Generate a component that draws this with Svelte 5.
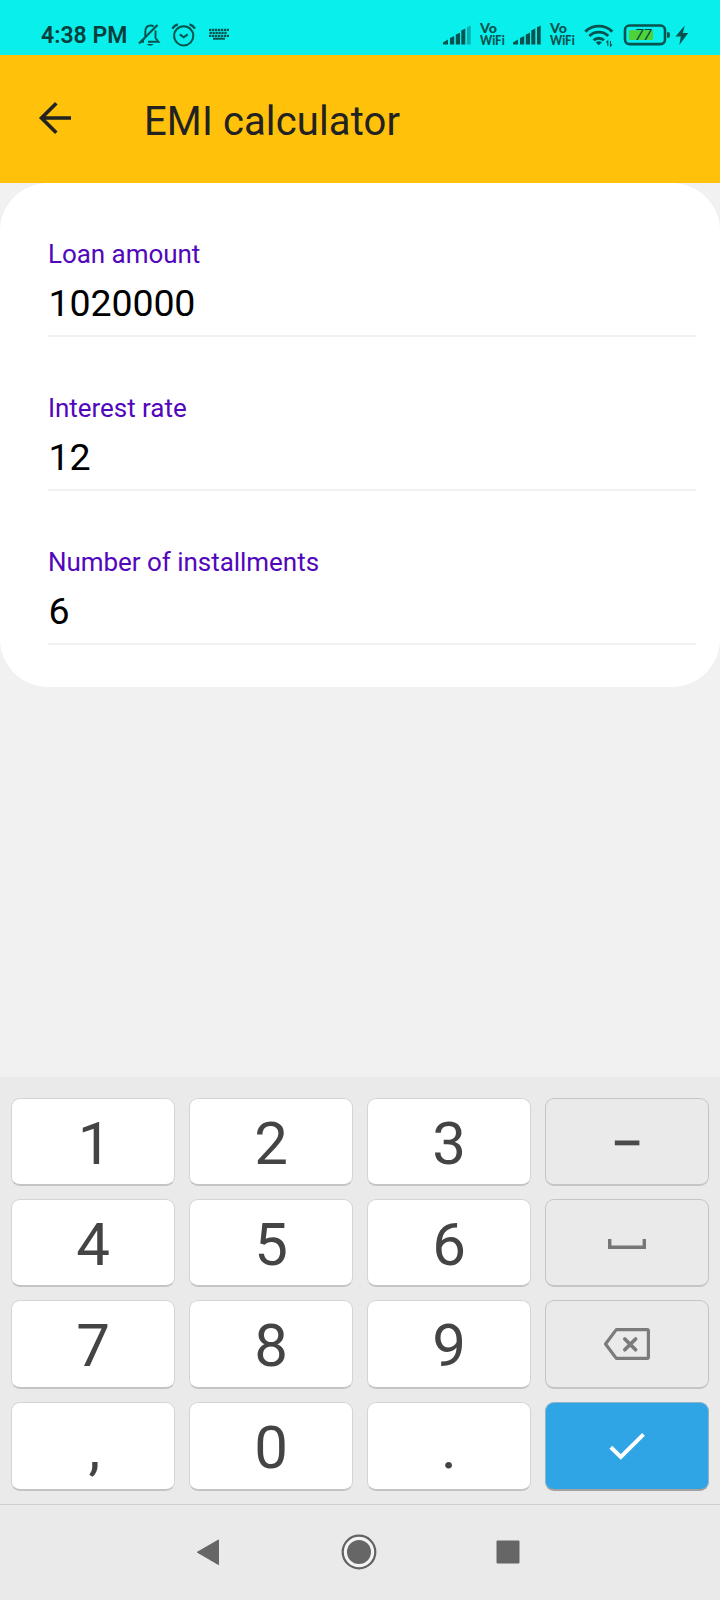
<script>
  const fields = [
    { label: 'Loan amount', value: '1020000' },
    { label: 'Interest rate', value: '12' },
    { label: 'Number of installments', value: '6' }
  ];
  const keys = ['1', '2', '3', 'minus', '4', '5', '6', 'space', '7', '8', '9', 'delete', ',', '0', '.', 'done'];
  const special = ['minus', 'space', 'delete', 'done'];
  const keyboardRows = [
    { y: 30, x: 209, n: 7 },
    { y: 33, x: 209.6, n: 6 },
    { y: 36, x: 209, n: 7 }
  ];
</script>

{#snippet signal(weak)}
  <svg class="signal" width="28" height="20" viewBox="0 0 28 20">
    <path d="M0 19.500v-2L5 14.500v5z" />
    <path d="M7 19.500v-6.500l4.200-1.900v8.400z" />
    <path d="M12.800 19.500V9.600l4.200-1.900v11.800z" />
    <path d="M18.300 19.500V5.600l4-2.200v16.100z" />
    <path d="M24 19.500V2.300L27.700.500v19z" opacity={weak ? 0.4 : 1} />
  </svg>
{/snippet}

{#snippet vowifi()}
  <svg class="vowifi" width="26" height="24" viewBox="0 0 26 24">
    <text x="0" y="11" textLength="17" lengthAdjust="spacingAndGlyphs">Vo</text>
    <text x="0" y="22.900" textLength="24.700" lengthAdjust="spacingAndGlyphs">WiFi</text>
  </svg>
{/snippet}

<div class="screen">
  <div class="status">
    <span class="time">4:38 PM</span>
    <svg class="bell" width="24" height="24" viewBox="138 23 24 24" fill="none" stroke="currentColor" stroke-width="1.900">
      <path d="M145.300 36.500V32c0-4.200 2-6.500 5.400-6.500 1.300 0 2.200.3 3 .9M155.500 30.500v7.500l3 3.700H148M144.500 38.300l-3 3.400h2.500" />
      <path d="M139 43.500L157.500 25" stroke-width="2.100" />
      <path d="M147 44h6.400c-.7 2.200-5.700 2.200-6.400 0z" fill="currentColor" stroke="none" />
    </svg>
    <svg class="alarm" width="26" height="26" viewBox="171 22 26 26" fill="none" stroke="currentColor" stroke-width="2">
      <circle cx="183.700" cy="35.800" r="9.600" />
      <path d="M179.800 34.300l3.900 3 4-3" stroke-width="2.100" />
      <path d="M172.300 28.700c1.200-2 3-3.500 5.500-4.300M195 28.700c-1.200-2-3-3.500-5.500-4.300" stroke-width="2.300" />
    </svg>
    <svg class="board" width="22" height="14" viewBox="208 27 22 14">
      {#each keyboardRows as row}
        {#each Array(row.n) as _, i}
          <rect x={row.x + i * 2.950} y={row.y - 1.200} width="2.300" height="2.200" />
        {/each}
      {/each}
      <rect x="213" y="37.700" width="12" height="2" />
    </svg>
    <span class="spring"></span>
    {@render signal(true)}
    {@render vowifi()}
    {@render signal(false)}
    {@render vowifi()}
    <svg class="wifi" width="30" height="24" viewBox="584 24 30 24" fill="none" stroke="currentColor" stroke-width="2.900">
      <path d="M585.300 31.600a19.500 19.500 0 0 1 27 0" />
      <path d="M589.300 36a13.500 13.500 0 0 1 19 0" />
      <path d="M593.600 40.300a7.500 7.500 0 0 1 10.400 0" />
      <path d="M595.800 42.600a4.200 4.200 0 0 1 6 0l-3 2.600z" fill="currentColor" stroke="none" />
      <path d="M607.800 46v-5l-1.400 1.500M610.500 41v5l1.400-1.500" stroke-width="1.100" />
    </svg>
    <svg class="battery" width="48" height="22" viewBox="623 24 48 22">
      <rect x="625" y="25.500" width="40" height="18.600" rx="4.500" fill="none" stroke="currentColor" stroke-width="2.600" />
      <rect x="629" y="30.300" width="24" height="9.600" rx="1" fill="#4fd237" />
      <path d="M667 32.200h1.500q1.300 0 1.300 1.300v3q0 1.300-1.300 1.300H667z" />
      <text x="635" y="39.900" textLength="16.500" lengthAdjust="spacingAndGlyphs">77</text>
    </svg>
    <svg class="bolt" width="14" height="22" viewBox="675 24 14 22">
      <path d="M684.700 25.500L675.500 36.500h5.300l-1.500 8.500 8.900-12h-5.300z" />
    </svg>
  </div>

  <header>
    <svg width="34" height="34" viewBox="0 0 34 34" fill="none" stroke="#222" stroke-width="3.600">
      <path d="M33 17H3.500M18.300 2.200L3.500 17l14.800 14.800" />
    </svg>
    <h1>EMI calculator</h1>
  </header>

  <main>
    <div class="card">
      {#each fields as f}
        <div class="field">
          <div class="label">{f.label}</div>
          <div class="value">{f.value}</div>
        </div>
      {/each}
    </div>
  </main>

  <div class="keyboard">
    {#each keys as k}
      <div class="key" class:side={special.includes(k)} class:done={k === 'done'}>
        {#if k === 'minus'}
          <svg width="26" height="6" viewBox="0 0 26 6"><rect x="0.800" y="0.500" width="24.600" height="4.800" fill="#4a4a4a" /></svg>
        {:else if k === 'space'}
          <svg width="38" height="10" viewBox="0 0 38 10" fill="none" stroke="#777" stroke-width="3.400"><path d="M1.700 0v8.300h34.600V0" /></svg>
        {:else if k === 'delete'}
          <svg class="del" width="48" height="34" viewBox="0 0 48 34" fill="none" stroke="#7b7b7b" stroke-width="3.200" stroke-linejoin="round">
            <path d="M13.300 2.600H44q1.400 0 1.400 1.400v26q0 1.400-1.400 1.400H13.300L2.500 17z" />
            <path d="M21.800 12L32.600 22.800M32.600 12L21.800 22.800" stroke-width="3.700" stroke-linecap="round" />
          </svg>
        {:else if k === 'done'}
          <svg width="36" height="28" viewBox="0 0 36 28" fill="none" stroke="#fff" stroke-width="4"><path d="M1.800 15.300l10 9.700L34.500 2.300" /></svg>
        {:else}
          <span class:nudge={k === '1' || k === ','}>{k}</span>
        {/if}
      </div>
    {/each}
  </div>

  <nav>
    <svg width="24" height="28" viewBox="0 0 24 28"><path d="M1.300 14.200L22.500 2v24.600z" fill="#666" stroke="#666" stroke-linejoin="round" /></svg>
    <svg width="36" height="36" viewBox="0 0 36 36">
      <circle cx="18" cy="18" r="16.300" fill="#f3f3f3" stroke="#626262" stroke-width="2.200" />
      <circle cx="18" cy="18" r="12" fill="#666" />
    </svg>
    <svg width="24" height="24" viewBox="0 0 24 24"><rect x="0.500" y="0.500" width="23" height="23" rx="1" fill="#666" /></svg>
  </nav>
</div>

<style>
  :global(body) { margin: 0; background: #f1f1f1; }
  .screen {
    width: 720px;
    height: 1600px;
    display: flex;
    flex-direction: column;
    overflow: hidden;
    font-family: Roboto, sans-serif;
    background: #f1f1f1;
  }
  svg { display: block; flex: none; }
  .status {
    box-sizing: border-box;
    height: 55px;
    padding: 22px 31px 0 41px;
    display: flex;
    align-items: flex-start;
    background: #09efeb;
    color: #07534f;
    fill: currentColor;
  }
  .time {
    width: 97px;
    font-size: 23px;
    font-weight: 600;
    line-height: 28px;
    white-space: nowrap;
    color: #073f3d;
  }
  .bell { margin-top: 1px; }
  .alarm { margin-left: 9px; }
  .board { margin: 5px 0 0 11px; }
  .spring { flex: 1; }
  .signal { margin: 3px 9px 0 0; }
  .vowifi { margin: 0 7px 0 0; font: 900 12.500px Lato, sans-serif; overflow: visible; }
  .wifi { margin: 2px 9px 0 1px; }
  .battery { margin: 2px 4px 0 0; }
  .battery text { font: italic 400 14px Roboto, sans-serif; fill: #073f3d; }
  .bolt { margin-top: 2px; }

  header {
    box-sizing: border-box;
    height: 128px;
    padding: 42px 0 0 38px;
    display: flex;
    gap: 72px;
    background: #ffc10a;
  }
  header svg { margin-top: 4px; }
  h1 {
    margin: 0;
    font-size: 40px;
    font-weight: 400;
    line-height: 50px;
    letter-spacing: 0.120px;
    color: #222;
  }
  main { height: 894px; }
  .card {
    box-sizing: border-box;
    height: 504px;
    padding: 56px 24px 0 48px;
    border-radius: 48px;
    background: #fff;
    display: flex;
    flex-direction: column;
    gap: 56px;
  }
  .field { height: 96px; border-bottom: 2px solid #f1f1f1; }
  .label { font-size: 26px; line-height: 30px; letter-spacing: -0.040px; color: #5207bb; }
  .value { margin: 12px 0 0 0.500px; font-size: 37.500px; line-height: 45px; letter-spacing: -0.100px; color: #000; }

  .keyboard {
    box-sizing: border-box;
    height: 428px;
    padding: 21px 11px 0;
    display: grid;
    grid-template-columns: repeat(4, 164px);
    grid-template-rows: 88px 88px 89px 89px;
    gap: 13px 14px;
    background: #eaeaea;
    border-bottom: 1px solid #cecece;
  }
  .key {
    box-sizing: border-box;
    display: flex;
    align-items: center;
    justify-content: center;
    background: #fff;
    border: 1px solid #d4d4d4;
    border-bottom: 2px solid #c4c4c4;
    border-radius: 9px;
    color: #444;
    font-size: 60px;
    line-height: 60px;
  }
  .key span { padding-top: 4px; }
  .key .nudge { padding-left: 3px; }
  .side { background: #eaeaea; border-color: #c5c5c5; }
  .side svg { margin-top: 2px; }
  .side .del { margin: 0; }
  .done { background: #2fa5e6; border-color: #8fb4c8; border-bottom-color: #a2a2a2; }
  .done svg { margin-top: 0; }
  nav {
    flex: 1;
    padding: 0 0 2px 196px;
    display: flex;
    align-items: center;
    background: #eaeaea;
  }
  nav svg:nth-child(2) { margin: 0 119px 0 121px; }
</style>
